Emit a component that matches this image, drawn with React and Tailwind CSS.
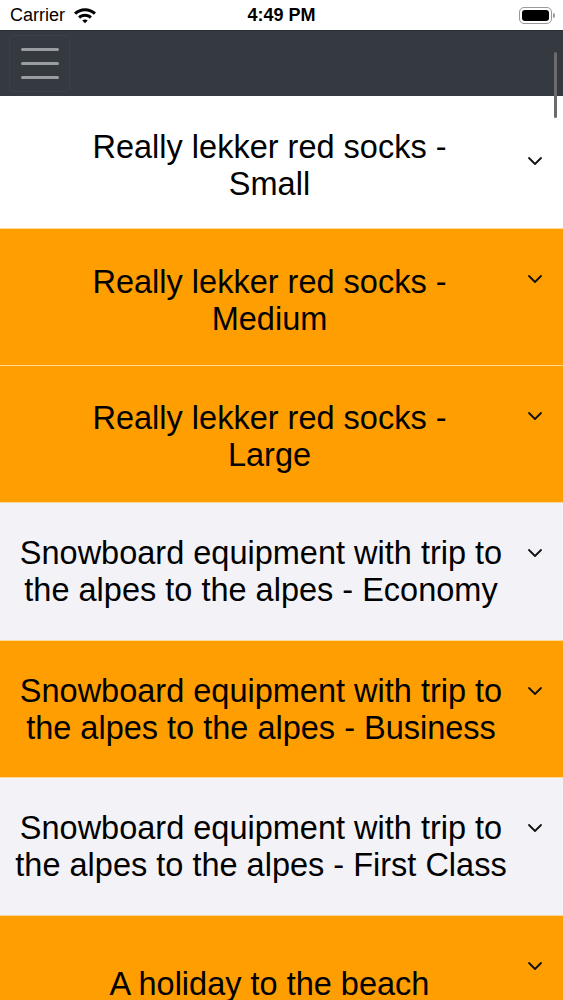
import React from "react";

const items = [
  { title: ["Really lekker red socks -", "Small"], bg: "bg-white", h: "h-[133px]", pad: "pl-[32px] pt-[7px]", first: true },
  { title: ["Really lekker red socks -", "Medium"], bg: "bg-[#ff9e00]", h: "h-[137px]", pad: "pl-[32px] pt-[8px]" },
  { title: ["Really lekker red socks -", "Large"], bg: "bg-[#ff9e00]", h: "h-[137px]", pad: "pl-[32px] pt-[6px]" },
  { title: ["Snowboard equipment with trip to", "the alpes to the alpes - Economy"], bg: "bg-[#f2f2f7]", h: "h-[138px]", pad: "pl-[15px] pt-[1px]" },
  { title: ["Snowboard equipment with trip to", "the alpes to the alpes - Business"], bg: "bg-[#ff9e00]", h: "h-[137px]", pad: "pl-[15px] pt-[1px]" },
  { title: ["Snowboard equipment with trip to", "the alpes to the alpes - First Class"], bg: "bg-[#f2f2f7]", h: "h-[138px]", pad: "pl-[15px] pt-[1px]" },
  { title: ["A holiday to the beach"], bg: "bg-[#ff9e00]", h: "h-[137px]", pad: "pl-[32px] pt-[0px]" },
];

const Chevron = () => (
  <svg width="16" height="10" viewBox="0 0 16 10" fill="none">
    <path d="M2 2l6 6 6-6" stroke="#111" strokeWidth="1.8" strokeLinecap="round" strokeLinejoin="round" />
  </svg>
);

const StatusBar = () => (
  <div className="h-[30px] bg-white flex items-center justify-between px-[10px] relative text-[18px] text-black">
    <div className="flex items-center gap-[8px]">
      <span>Carrier</span>
      <svg width="24" height="17" viewBox="0 0 23 16">
        <path d="M11.5 1C7.3 1 3.7 2.6 1 5.2l2 2.1C5.2 5.2 8.2 3.9 11.5 3.9s6.3 1.3 8.5 3.4l2-2.1C19.3 2.6 15.7 1 11.5 1z" fill="#000" />
        <path d="M11.5 6.4c-2.6 0-4.9 1-6.6 2.6l2 2.1c1.2-1.1 2.8-1.8 4.6-1.8s3.4.7 4.6 1.8l2-2.1c-1.7-1.6-4-2.6-6.6-2.6z" fill="#000" />
        <path d="M11.5 11.8c-1 0-1.9.4-2.6 1l2.6 2.7 2.6-2.7c-.7-.6-1.6-1-2.6-1z" fill="#000" />
      </svg>
    </div>
    <span className="absolute left-0 right-0 text-center font-semibold pointer-events-none">4:49 PM</span>
    <div className="flex items-center mr-[-2px]">
      <div className="w-[33px] h-[17px] rounded-[5px] border-[1.5px] border-[#9a9a9a] p-[2px]">
        <div className="w-full h-full bg-black rounded-[3px]" />
      </div>
      <div className="w-[2px] h-[5px] bg-[#9a9a9a] rounded-r-sm ml-[1px]" />
    </div>
  </div>
);

export default function App() {
  return (
    <div className="relative h-[1000px] overflow-hidden bg-white" style={{ fontFamily: '"Liberation Sans", Arial, sans-serif' }}>
      <StatusBar />
      <div className="h-[66px] bg-[#343a40] border-t border-[#2a2e33] flex items-center px-[9px]">
        <button className="w-[61px] h-[57px] rounded-[4px] border border-[#3b4147] flex flex-col items-center justify-center gap-[11px]">
          <span className="block w-[38px] h-[3px] rounded-full bg-[#9a9ea3]" />
          <span className="block w-[38px] h-[3px] rounded-full bg-[#9a9ea3]" />
          <span className="block w-[38px] h-[3px] rounded-full bg-[#9a9ea3]" />
        </button>
      </div>
      <div className="flex flex-col">
        {items.map((it, i) => (
          <div
            key={i}
            className={`${it.bg} ${it.h} flex items-center border-b border-[#ffd89a] last:border-b-0`}
          >
            <div className={`flex-1 ${it.pad} text-center text-[32.5px] leading-[37px] text-black`}>
              {it.title.map((t, j) => (
                <div key={j} className="whitespace-nowrap">{t}</div>
              ))}
            </div>
            <div className={`w-[56px] flex justify-center shrink-0 ${it.first ? "self-center mt-[-2px]" : "self-start mt-[45px]"}`}>
              <Chevron />
            </div>
          </div>
        ))}
      </div>
      <div className="absolute right-[6px] top-[52px] w-[3px] h-[66px] rounded-full bg-[#6b6b6b]" />
    </div>
  );
}
